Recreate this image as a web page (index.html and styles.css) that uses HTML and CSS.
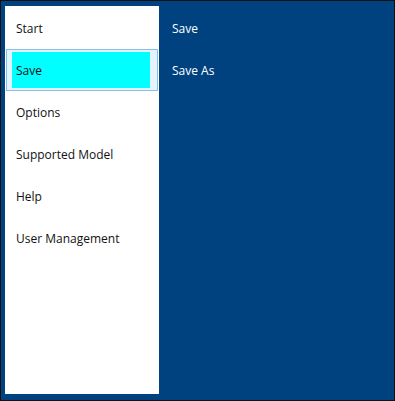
FILE: index.html
```html
<!DOCTYPE html>
<html lang="en">
	<head>
		<meta charset="utf-8" />
		<title>Menu</title>
		<link rel="stylesheet" href="styles.css">
	</head>
	<body>
		<div class="window">
			<ul class="sideMenu">
				<li><span>Start</span></li>
				<li class="active"><span>Save</span></li>
				<li><span>Options</span></li>
				<li><span>Supported Model</span></li>
				<li><span>Help</span></li>
				<li><span>User Management</span></li>
			</ul>
			<ul class="subMenu">
				<li>Save</li>
				<li>Save As</li>
			</ul>
		</div>
	</body>
</html>
```

FILE: styles.css
```css
*{
	padding:0;
	margin:0;
	list-style: none;
	box-sizing: border-box;
}
body {
	font-family: "Open Sans", "Noto Sans", sans-serif;
	font-size: 12px;
}
.window {
	width: 395px;
	height: 401px;
	border: 1px solid #111;
	background-color: #00427f;
	display: flex;
	align-items: flex-start;
}
.sideMenu {
	width: 154px;
	height: 388px;
	margin: 5px 0 0 4px;
	padding: 1px 1px 0 1px;
	background-color: #fff;
	color: #111;
}
.sideMenu li {
	height: 42px;
	border: 1px solid transparent;
	padding-left: 9px;
	display: flex;
	align-items: center;
}
.sideMenu li.active {
	border-color: #84c1ea;
	background-color: #e5f3fb;
	padding: 2px 7px 2px 5px;
	align-items: stretch;
}
.sideMenu li.active span {
	flex: 1;
	background-color: #00ffff;
	padding-left: 4px;
	display: flex;
	align-items: center;
}
.subMenu {
	padding: 6px 0 0 13px;
	color: #fff;
}
.subMenu li {
	height: 42px;
	display: flex;
	align-items: center;
}
```
